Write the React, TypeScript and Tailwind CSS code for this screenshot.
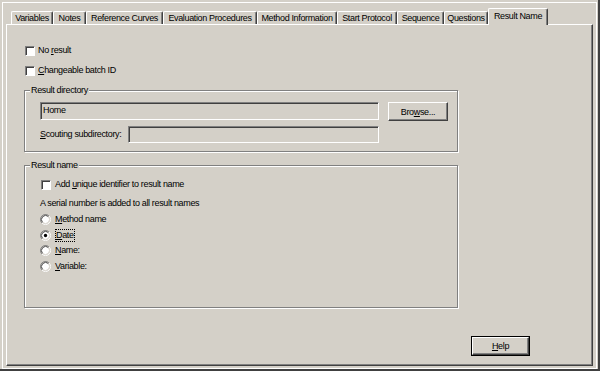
const TABS: Array<{ label: string; w: string }> = [
  { label: "Variables", w: "w-[42px]" },
  { label: "Notes", w: "w-[33px]" },
  { label: "Reference Curves", w: "w-[77px]" },
  { label: "Evaluation Procedures", w: "w-[94px]" },
  { label: "Method Information", w: "w-[80px]" },
  { label: "Start Protocol", w: "w-[60px]" },
  { label: "Sequence", w: "w-[47px]" },
  { label: "Questions", w: "w-[44px]" },
];

function Check() {
  return (
    <span className="box-border block h-[10px] w-[10px] shrink-0 border border-t-[#808080] border-l-[#808080] border-b-white border-r-white bg-white shadow-[inset_1px_1px_0_#404040]" />
  );
}

function Radio({ checked }: { checked?: boolean }) {
  return (
    <svg width="11" height="11" viewBox="0 0 12 12" className="shrink-0">
      <circle cx="6" cy="6" r="4.5" fill="#fff" />
      <path d="M2.11 9.89 A5.5 5.5 0 0 1 9.89 2.11" fill="none" stroke="#808080" />
      <path d="M9.89 2.11 A5.5 5.5 0 0 1 2.11 9.89" fill="none" stroke="#fff" />
      <path d="M2.82 9.18 A4.5 4.5 0 0 1 9.18 2.82" fill="none" stroke="#404040" />
      <path d="M9.18 2.82 A4.5 4.5 0 0 1 2.82 9.18" fill="none" stroke="#d4d0c8" />
      {checked && <circle cx="6" cy="6" r="1.8" fill="#000" />}
    </svg>
  );
}

function Group({
  title,
  className,
  children,
}: {
  title: string;
  className: string;
  children: React.ReactNode;
}) {
  return (
    <div
      className={
        "relative box-border border border-[#808080] shadow-[inset_1px_1px_0_#fff,1px_1px_0_#fff] " +
        className
      }
    >
      <span className="absolute left-[5px] top-[-7px] bg-[#d4d0c8] px-[1px] leading-[12px]">
        {title}
      </span>
      {children}
    </div>
  );
}

export default function App() {
  return (
    <div className="box-border h-[371px] w-[600px] overflow-hidden border-r-2 border-b-2 border-[#404040] bg-[#d4d0c8] pl-[2px] pt-[2px] font-['Liberation_Sans',Arial,sans-serif] text-[9px] tracking-[-0.35px] whitespace-nowrap text-black">
      <div className="box-border flex h-[367px] w-[595px] flex-col border border-white">
        {/* tab strip */}
        <div className="mt-[5px] flex h-[16px] items-end pl-[8px]">
          {TABS.map((t) => (
            <div
              key={t.label}
              className={
                "box-border flex h-[13px] shrink-0 justify-center rounded-t-[2px] border-t border-l border-r border-t-white border-l-white border-r-[#404040] pt-[1px] leading-[10px] shadow-[inset_-1px_0_0_#808080] " +
                t.w
              }
            >
              {t.label}
            </div>
          ))}
          <div className="relative z-10 -mb-px box-border flex h-[17px] w-[60px] shrink-0 justify-center rounded-t-[2px] border-t border-l border-r border-t-white border-l-white border-r-[#404040] bg-[#d4d0c8] pt-[2px] leading-[10px] shadow-[inset_-1px_0_0_#808080]">
            Result Name
          </div>
        </div>

        {/* panel */}
        <div className="ml-[3px] box-border flex h-[342px] w-[587px] flex-col border border-t-white border-l-white border-r-[#404040] border-b-[#404040] pl-[17px] pt-[16px] pb-[9px] shadow-[inset_-1px_-1px_0_#808080]">
          <div className="flex h-[20px] items-center gap-[3px] pl-[1px]">
            <Check />
            <span>
              No <u>r</u>esult
            </span>
          </div>
          <div className="flex h-[20px] items-center gap-[3px] pl-[1px]">
            <Check />
            <span>
              <u>C</u>hangeable batch ID
            </span>
          </div>

          <Group title="Result directory" className="mt-[9px] h-[62px] w-[434px] pl-[15px] pt-[11px]">
            <div className="flex items-start">
              <div className="box-border flex h-[18px] w-[339px] items-center border border-t-[#808080] border-l-[#808080] border-b-white border-r-white pl-[2px] shadow-[inset_1px_1px_0_#404040,inset_-1px_-1px_0_#d4d0c8]">
                Home
              </div>
              <button className="ml-[9px] box-border h-[19px] w-[60px] border border-t-white border-l-white border-b-[#404040] border-r-[#404040] bg-[#d4d0c8] leading-[10px] shadow-[inset_-1px_-1px_0_#808080]">
                Bro<u>w</u>se...
              </button>
            </div>
            <div className="mt-[5px] flex w-[339px] items-center justify-between">
              <span>
                <u>S</u>couting subdirectory:
              </span>
              <div className="box-border h-[17px] w-[251px] border border-t-[#808080] border-l-[#808080] border-b-white border-r-white shadow-[inset_1px_1px_0_#404040,inset_-1px_-1px_0_#d4d0c8]" />
            </div>
          </Group>

          <Group title="Result name" className="mt-[13px] h-[143px] w-[434px] pl-[15px] pt-[11px]">
            <div className="flex h-[16px] items-center gap-[4px] pl-[1px]">
              <Check />
              <span>
                Add <u>u</u>nique identifier to result name
              </span>
            </div>
            <div className="mt-[3px] flex h-[16px] items-center">
              A serial number is added to all result names
            </div>
            <div className="flex h-[15.5px] items-center gap-[4px]">
              <Radio />
              <span>
                <u>M</u>ethod name
              </span>
            </div>
            <div className="flex h-[15.5px] items-center gap-[4px]">
              <Radio checked />
              <span className="border border-dotted border-black leading-[11px]">
                <u>D</u>ate
              </span>
            </div>
            <div className="flex h-[15.5px] items-center gap-[4px]">
              <Radio />
              <span>
                <u>N</u>ame:
              </span>
            </div>
            <div className="flex h-[15.5px] items-center gap-[4px]">
              <Radio />
              <span>
                <u>V</u>ariable:
              </span>
            </div>
          </Group>

          <div className="mt-auto flex justify-end pr-[62px]">
            <button className="box-border h-[20px] w-[59px] border border-black bg-[#d4d0c8] p-0">
              <span className="box-border flex h-full w-full items-center justify-center border border-t-white border-l-white border-b-[#404040] border-r-[#404040] leading-[10px] shadow-[inset_-1px_-1px_0_#808080]">
                <u>H</u>elp
              </span>
            </button>
          </div>
        </div>
      </div>
    </div>
  );
}
